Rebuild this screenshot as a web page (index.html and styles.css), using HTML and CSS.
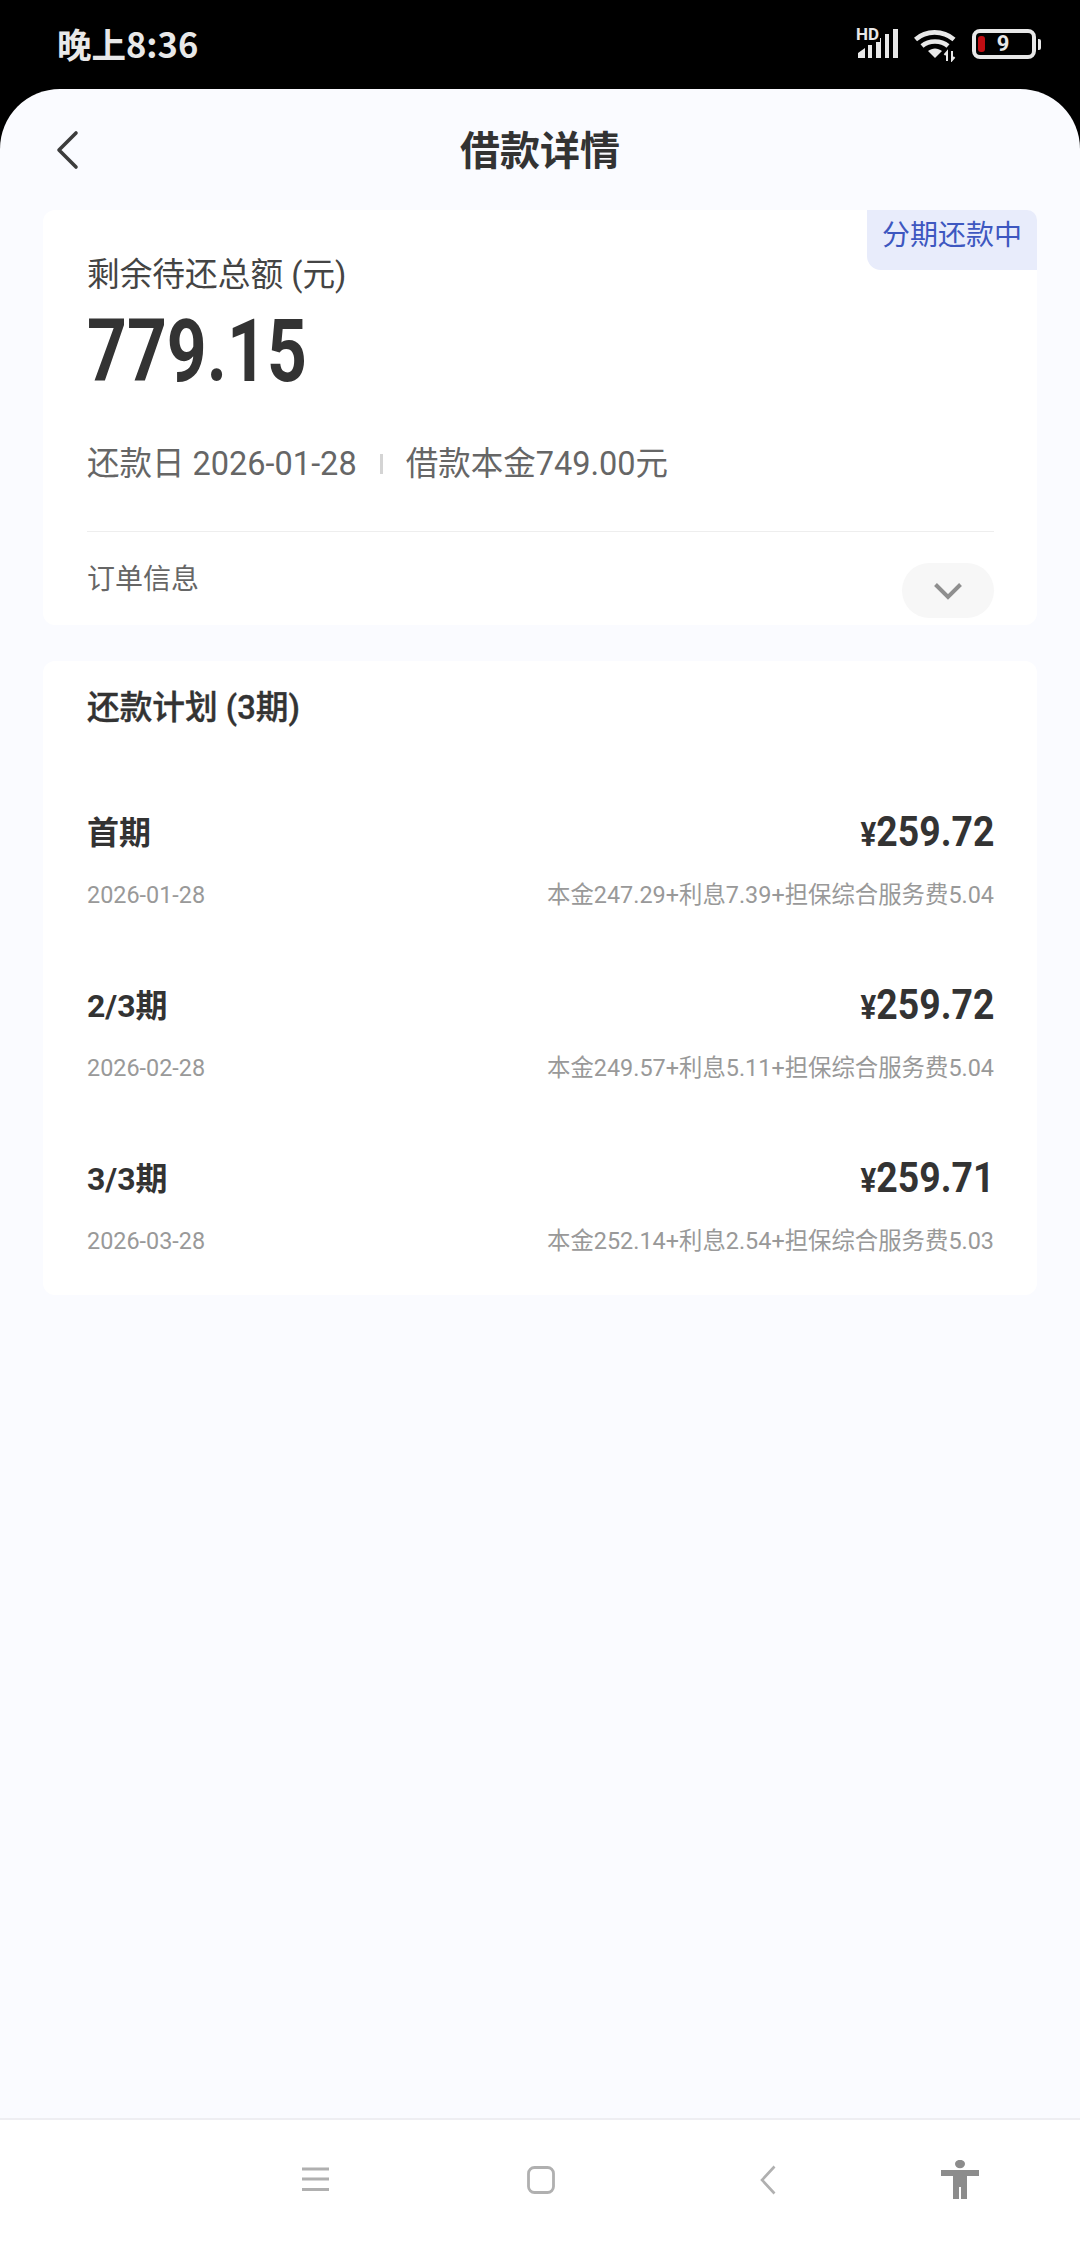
FILE: index.html
```html
<!DOCTYPE html>
<html lang="zh-CN">
<head>
<meta charset="utf-8">
<title>借款详情</title>
<link rel="stylesheet" href="styles.css">
</head>
<body>
<div class="phone">
  <header class="status">
    <span class="time">晚上8:36</span>
    <div class="status-icons">
      <span class="signal">
        <span class="hd">HD</span>
        <svg width="41" height="29" viewBox="0 0 41 29"><path d="M0 29V24L7 19V29ZM10 29V16H14V29ZM18 29V9H23V29ZM27 29V5H31V29ZM35 29V0H40V29Z" fill="#e8e8e8"/></svg>
      </span>
      <svg class="wifi" width="44" height="33" viewBox="0 0 44 33"><g fill="none" stroke="#e8e8e8" stroke-width="4.6"><path d="M1.5 10.5C12 1 29 1 40 10.5"/><path d="M8 17C15 11 27 11 34 17"/></g><path d="M14 22C18.500 18.500 23.500 18.500 28 22L21 29Z" fill="#e8e8e8"/><path d="M33 32V23L30.500 26M38 22V31L40.500 28" fill="none" stroke="#e8e8e8" stroke-width="2"/></svg>
      <div class="battery">
        <div class="battery-body"><span class="battery-level"></span><span class="battery-num">9</span></div>
        <span class="battery-tip"></span>
      </div>
    </div>
  </header>

  <div class="sheet">
    <div class="topbar">
      <svg class="back" width="24" height="40" viewBox="0 0 24 40"><path d="M21 3L4 20L21 37" fill="none" stroke="#3c3c3c" stroke-width="3.600" stroke-linecap="round" stroke-linejoin="round"/></svg>
      <h1 class="title">借款详情</h1>
    </div>

    <section class="card summary">
      <span class="tag">分期还款中</span>
      <div class="label">剩余待还总额 (元)</div>
      <div class="amount"><span class="narrow">779.15</span></div>
      <div class="meta">
        <span>还款日 2026-01-28</span>
        <span class="sep"></span>
        <span>借款本金749.00元</span>
      </div>
      <div class="order">
        <span class="order-label">订单信息</span>
        <span class="pill"><svg width="30" height="18" viewBox="0 0 30 18"><path d="M2.500 2.500L15 15L27.500 2.500" fill="none" stroke="#8f8f8f" stroke-width="4"/></svg></span>
      </div>
    </section>

    <section class="card plan">
      <h2 class="plan-title">还款计划 (3期)</h2>
      <div class="rows">
        <div class="row">
          <div class="row-top"><span class="term">首期</span><span class="price"><span class="yen">¥</span>259.72</span></div>
          <div class="row-sub"><span>2026-01-28</span><span>本金247.29+利息7.39+担保综合服务费5.04</span></div>
        </div>
        <div class="row">
          <div class="row-top"><span class="term">2/3期</span><span class="price"><span class="yen">¥</span>259.72</span></div>
          <div class="row-sub"><span>2026-02-28</span><span>本金249.57+利息5.11+担保综合服务费5.04</span></div>
        </div>
        <div class="row">
          <div class="row-top"><span class="term">3/3期</span><span class="price"><span class="yen">¥</span>259.71</span></div>
          <div class="row-sub"><span>2026-03-28</span><span>本金252.14+利息2.54+担保综合服务费5.03</span></div>
        </div>
      </div>
    </section>
  </div>

  <nav class="navbar">
    <svg class="nav-menu" width="28" height="24" viewBox="0 0 28 24"><path d="M0 2H27M0 12H27M0 22.500H27" stroke="#b0b0b0" stroke-width="3"/></svg>
    <svg class="nav-home" width="28" height="28" viewBox="0 0 28 28"><rect x="1.500" y="1.500" width="25" height="25" rx="6" fill="none" stroke="#b0b0b0" stroke-width="2.800"/></svg>
    <svg class="nav-back" width="16" height="30" viewBox="0 0 16 30"><path d="M14.500 1.500L2 15L14.500 28.500" fill="none" stroke="#b0b0b0" stroke-width="2.600"/></svg>
    <svg class="nav-person" width="38" height="40" viewBox="0 0 38 40"><ellipse cx="19" cy="4" rx="5" ry="4.200" fill="#8c8c8c"/><path d="M0 10H38V16H26V39H20V27H18V39H12V16H0Z" fill="#8c8c8c"/></svg>
  </nav>
</div>
</body>
</html>
```

FILE: styles.css
```css
* { box-sizing: border-box; }
html, body { margin: 0; padding: 0; }
body {
  background: #000;
  font-family: Roboto, "Noto Sans CJK SC", sans-serif;
  color: #333;
}
.phone {
  width: 1080px;
  height: 2248px;
  display: flex;
  flex-direction: column;
  overflow: hidden;
}
.status {
  height: 89px;
  flex: none;
  background: #000;
  padding: 0 39px 0 57px;
  display: flex;
  justify-content: space-between;
  align-items: flex-start;
}
.time {
  margin-top: 21px;
  font-size: 34.5px;
  line-height: 44px;
  font-weight: 700;
  color: #e8e8e8;
  font-family: "Noto Sans CJK SC", sans-serif;
}
.status-icons {
  display: flex;
  align-items: flex-start;
  padding-top: 29px;
}
.signal {
  display: block;
  position: relative;
  width: 41px;
  height: 29px;
}
.hd {
  position: absolute;
  left: -2px;
  top: -2px;
  font-size: 17px;
  line-height: 15px;
  font-weight: 700;
  color: #e8e8e8;
  background: #000;
  padding-right: 1px;
  z-index: 1;
}
.wifi { margin-left: 15px; }
.battery {
  margin-left: 14px;
  display: flex;
  align-items: center;
}
.battery-body {
  width: 64px;
  height: 30px;
  border: 4px solid #e8e8e8;
  border-radius: 8px;
  display: flex;
  align-items: center;
  padding-left: 2px;
  position: relative;
}
.battery-level {
  width: 7px;
  height: 16px;
  background: #c00d12;
  border-radius: 3px;
}
.battery-num {
  position: absolute;
  left: 17px;
  top: 0;
  width: 20px;
  text-align: center;
  font-size: 22px;
  line-height: 22px;
  font-weight: 700;
  color: #e8e8e8;
}
.battery-tip {
  width: 3px;
  height: 11px;
  margin-left: 2px;
  background: #e8e8e8;
  border-radius: 0 2px 2px 0;
}

.sheet {
  flex: 1;
  background: #fafbff;
  border-radius: 60px 60px 0 0;
  padding-bottom: 1px;
}
.topbar {
  position: relative;
  height: 121px;
  display: flex;
  align-items: center;
  justify-content: center;
}
.back {
  position: absolute;
  left: 55px;
  top: 41px;
}
.title {
  margin: 0;
  font-size: 40px;
  line-height: 56px;
  font-weight: 700;
  color: #333;
  font-family: "Noto Sans CJK SC", sans-serif;
  transform: translateY(-2px);
}
.card {
  margin: 0 43px;
  width: 994px;
  background: #fff;
  border-radius: 12px;
  padding: 0 43px 0 44px;
  position: relative;
}
.summary {
  height: 415px;
  padding-top: 41px;
}
.tag {
  position: absolute;
  right: 0;
  top: 0;
  width: 170px;
  height: 60px;
  padding-top: 4px;
  background: #e8ecfb;
  color: #3d57c0;
  border-radius: 0 10px 0 14px;
  font-size: 28px;
  line-height: 44px;
  text-align: center;
}
.label {
  font-size: 32.7px;
  line-height: 48px;
  color: #444;
}
.amount {
  margin-top: 12px;
  height: 80px;
  font-size: 87px;
  line-height: 80px;
  font-weight: 700;
  color: #333;
}
.narrow {
  display: inline-block;
  transform: scaleX(0.8);
  transform-origin: left center;
}
.meta {
  margin-top: 49px;
  display: flex;
  align-items: center;
  font-size: 32.5px;
  line-height: 48px;
  color: #666;
}
.sep {
  width: 3px;
  height: 20px;
  background: #d4d4d4;
  margin: 0 23px;
}
.order {
  margin-top: 43px;
  border-top: 1px solid #eeeeee;
  display: flex;
  justify-content: space-between;
  align-items: flex-start;
}
.order-label {
  margin-top: 28px;
  font-size: 28px;
  line-height: 40px;
  color: #666;
}
.pill {
  margin-top: 31px;
  width: 92px;
  height: 55px;
  border-radius: 28px;
  background: #f7f7f7;
  display: flex;
  align-items: center;
  justify-content: center;
}
.plan {
  margin-top: 36px;
  padding-top: 27px;
  padding-bottom: 37px;
}
.plan-title {
  margin: 0;
  font-size: 32.7px;
  line-height: 40px;
  font-weight: 500;
  color: #333;
  -webkit-text-stroke: 0.4px #333;
}
.rows {
  margin-top: 84px;
  display: flex;
  flex-direction: column;
  gap: 73px;
}
.row { height: 100px; }
.row-top {
  height: 44px;
  display: flex;
  justify-content: space-between;
  align-items: center;
}
.term {
  font-size: 32px;
  line-height: 44px;
  font-weight: 700;
  color: #333;
  transform: translateY(-1px);
}
.price {
  font-size: 42px;
  line-height: 44px;
  font-weight: 700;
  color: #333;
  transform: translateY(-1px) scaleX(0.89);
  transform-origin: right center;
}
.yen {
  font-size: 33px;
}
.row-sub {
  margin-top: 22px;
  display: flex;
  justify-content: space-between;
  font-size: 23.4px;
  line-height: 34px;
  color: #999;
}
.navbar {
  height: 130px;
  flex: none;
  background: #fff;
  border-top: 2px solid #eeeef2;
  display: flex;
  align-items: flex-start;
  padding-left: 302px;
}
.nav-menu { margin-top: 47px; }
.nav-home { margin: 46px 0 0 197px; }
.nav-back { margin: 45px 0 0 205px; }
.nav-person { margin: 40px 0 0 165px; }
```
